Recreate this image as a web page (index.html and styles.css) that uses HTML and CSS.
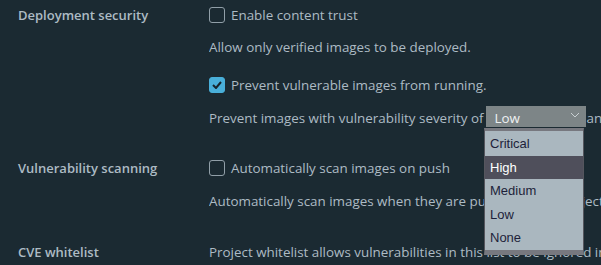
FILE: index.html
```html
<!DOCTYPE html>
<html>
<head>
<meta charset="utf-8">
<link rel="stylesheet" href="styles.css">
</head>
<body>
<div class="form">
  <div class="row row-deploy">
    <div class="label">Deployment security</div>
    <div class="content">
      <div class="check"><span class="box"></span><span>Enable content trust</span></div>
      <div class="help help-a">Allow only verified images to be deployed.</div>
      <div class="check check-b"><span class="box checked"><svg width="10" height="8" viewBox="0 0 10 8"><path d="M1 4 L4 7 L9 1" fill="none" stroke="#17242b" stroke-width="2"/></svg></span><span>Prevent vulnerable images from running.</span></div>
      <div class="help help-b">Prevent images with vulnerability severity of<span class="select"><span>Low</span><svg class="chev" width="10" height="6" viewBox="0 0 10 6"><path d="M1 1 L5 5 L9 1" fill="none" stroke="#c9d0d3" stroke-width="1"/></svg></span>and above from being deployed.</div>
    </div>
  </div>
  <div class="row row-scan">
    <div class="label">Vulnerability scanning</div>
    <div class="content">
      <div class="check"><span class="box"></span><span>Automatically scan images on push</span></div>
      <div class="help help-c">Automatically scan images when they are pushed to the project registry.</div>
    </div>
  </div>
  <div class="row row-cve">
    <div class="label">CVE whitelist</div>
    <div class="content">
      <div class="help">Project whitelist allows vulnerabilities in this list to be ignored in this project when pushing and pulling images.</div>
    </div>
  </div>
</div>
<div class="menu">
  <div class="opt">Critical</div>
  <div class="opt active">High</div>
  <div class="opt">Medium</div>
  <div class="opt">Low</div>
  <div class="opt">None</div>
</div>
</body>
</html>
```
FILE: styles.css
```css
html, body {
  margin: 0;
  padding: 0;
  background: #1b2a32;
  width: 601px;
  height: 265px;
  overflow: hidden;
}
body {
  font-family: "Open Sans", "DejaVu Sans", sans-serif;
  color: #adbbc4;
  font-size: 13.4px;
  position: relative;
}
.form {
  padding: 7px 0 0 18px;
}
.row {
  display: grid;
  grid-template-columns: 191px 1fr;
  white-space: nowrap;
}
.label {
  font-weight: 600;
  font-size: 13px;
  line-height: 16px;
}
.content {
  display: flex;
  flex-direction: column;
  min-width: 0;
  overflow: hidden;
}
.check {
  display: flex;
  align-items: center;
  gap: 6px;
  height: 16px;
  line-height: 16px;
}
.box {
  width: 14px;
  height: 14px;
  border: 1px solid #919fa8;
  border-radius: 3px;
  display: inline-flex;
  align-items: center;
  justify-content: center;
  flex: none;
}
.box.checked {
  background: #49afd9;
  border-color: #49afd9;
}
.help {
  line-height: 16px;
}
.help-a { margin-top: 16px; }
.help-c { margin-top: 17px; }
.check-b { margin-top: 22px; }
.help-b { margin-top: 17px; }
.select {
  display: inline-flex;
  align-items: center;
  justify-content: space-between;
  width: 100px;
  height: 24px;
  box-sizing: border-box;
  padding: 0 6px 0 9px;
  background: #7d8587;
  color: #eef1f2;
  vertical-align: middle;
  margin: -5px 1px -3px 2px;
}
.chev { margin-top: -6px; }
.row-scan { margin-top: 33px; }
.row-cve { margin-top: 35px; }
.menu {
  position: absolute;
  left: 484px;
  top: 128px;
  width: 100px;
  box-sizing: border-box;
  background: #aab7bf;
  border: 1px solid #55565e;
  border-top: 3px solid #77787f;
  border-bottom: 5px solid #77787f;
  font-family: "Liberation Sans", Arial, sans-serif;
  font-size: 13px;
  color: #1d1f3a;
  padding-top: 1px;
}
.opt {
  height: 23.5px;
  line-height: 24px;
  padding-left: 5px;
}
.opt.active {
  background: #4f4f5b;
  color: #ffffff;
}
```
